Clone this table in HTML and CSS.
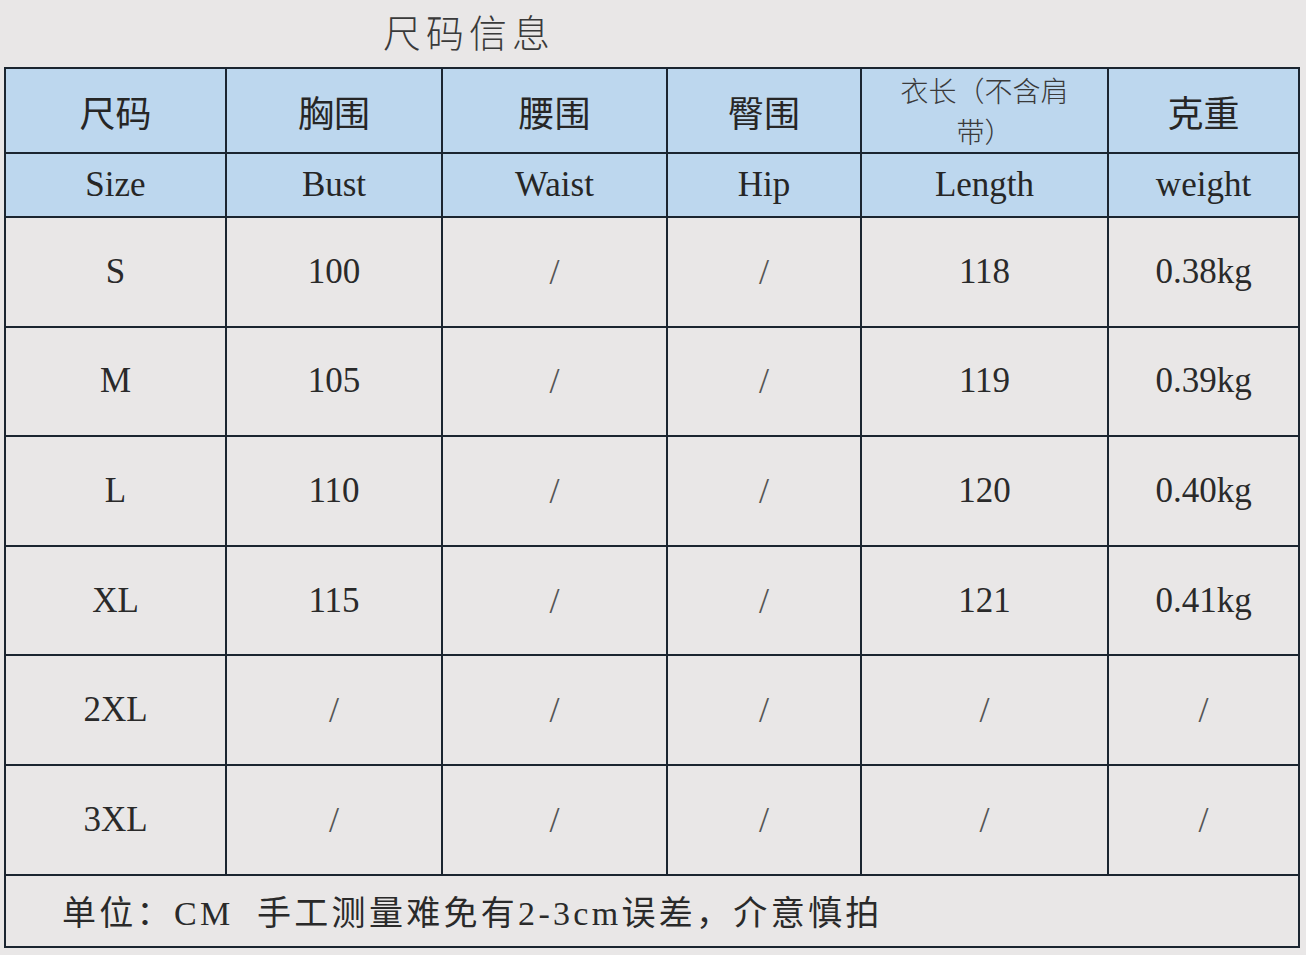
FILE: index.html
```html
<!DOCTYPE html>
<html lang="zh">
<head>
<meta charset="utf-8">
<title>尺码信息</title>
<link rel="stylesheet" href="styles.css">
</head>
<body>
<div class="page">
  <div class="title">尺码信息</div>
  <table class="chart">
    <colgroup>
      <col class="c1"><col class="c2"><col class="c3"><col class="c4"><col class="c5"><col class="c6">
    </colgroup>
    <tr class="h1">
      <th>尺码</th><th>胸围</th><th>腰围</th><th>臀围</th><th><span class="small">衣长（不含肩带）</span></th><th>克重</th>
    </tr>
    <tr class="h2">
      <th>Size</th><th>Bust</th><th>Waist</th><th>Hip</th><th>Length</th><th>weight</th>
    </tr>
    <tr class="row"><td>S</td><td>100</td><td class="sl">/</td><td class="sl">/</td><td>118</td><td>0.38kg</td></tr>
    <tr class="row"><td>M</td><td>105</td><td class="sl">/</td><td class="sl">/</td><td>119</td><td>0.39kg</td></tr>
    <tr class="row"><td>L</td><td>110</td><td class="sl">/</td><td class="sl">/</td><td>120</td><td>0.40kg</td></tr>
    <tr class="row"><td>XL</td><td>115</td><td class="sl">/</td><td class="sl">/</td><td>121</td><td>0.41kg</td></tr>
    <tr class="row"><td>2XL</td><td class="sl">/</td><td class="sl">/</td><td class="sl">/</td><td class="sl">/</td><td class="sl">/</td></tr>
    <tr class="row"><td>3XL</td><td class="sl">/</td><td class="sl">/</td><td class="sl">/</td><td class="sl">/</td><td class="sl">/</td></tr>
    <tr class="foot"><td colspan="6"><span class="note">单位：CM&nbsp; 手工测量难免有2-3cm误差，介意慎拍</span></td></tr>
  </table>
</div>
</body>
</html>
```

FILE: styles.css
```css
html, body {
  margin: 0;
  padding: 0;
  background: #e9e7e7;
}
body {
  width: 1306px;
  height: 955px;
  overflow: hidden;
  font-family: "Liberation Serif", "Noto Sans CJK SC", serif;
  color: #1f1f1f;
}
.page {
  padding-left: 4px;
}
.title {
  height: 67px;
  box-sizing: border-box;
  padding-left: 379px;
  padding-top: 6px;
  font-family: "Noto Sans CJK SC", sans-serif;
  font-weight: 300;
  font-size: 38px;
  line-height: 50px;
  letter-spacing: 5px;
  color: #3a3a3a;
}
.chart {
  border-collapse: collapse;
  table-layout: fixed;
  width: 1294px;
}
.c1 { width: 221px; }
.c2 { width: 216px; }
.c3 { width: 225px; }
.c4 { width: 194px; }
.c5 { width: 247px; }
.c6 { width: 191px; }
.chart th, .chart td {
  border: 2px solid #1b2530;
  padding: 0;
  text-align: center;
  vertical-align: middle;
  font-weight: normal;
}
.h1 th {
  background: #bdd7ee;
  height: 83px;
  font-family: "Noto Sans CJK SC", sans-serif;
  font-size: 36px;
  line-height: 50px;
  color: #262626;
}
.h1 .small {
  display: inline-block;
  vertical-align: middle;
  width: 200px;
  font-size: 28px;
  line-height: 41px;
  color: #3a3a3a;
  font-weight: 300;
}
.h2 th {
  background: #bdd7ee;
  height: 62px;
  font-size: 35px;
  color: #262626;
}
.row td {
  height: 107.6px;
  font-size: 35px;
  color: #2a2a2a;
}
.row td.sl {
  color: #555;
  font-size: 36px;
}
.foot td {
  height: 70px;
  text-align: left;
  padding-left: 56px;
  font-size: 34px;
}
.note {
  font-family: "Liberation Serif", "Noto Sans CJK SC", serif;
  color: #2a2a2a;
  letter-spacing: 3.3px;
}
```
